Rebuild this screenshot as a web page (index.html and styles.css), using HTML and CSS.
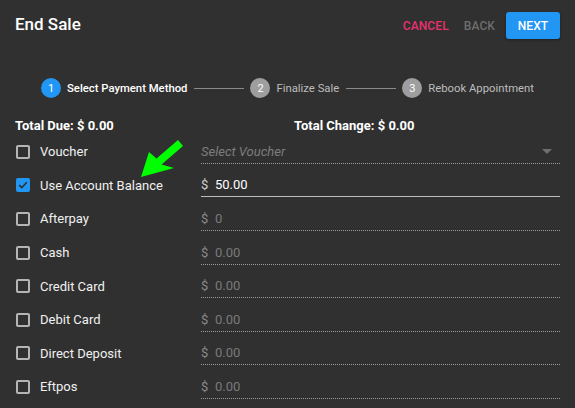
FILE: index.html
```html
<!DOCTYPE html>
<html>
<head>
<meta charset="utf-8">
<link rel="stylesheet" href="styles.css">
</head>
<body>
<div class="dialog">
  <div class="header">
    <div class="title">End Sale</div>
    <div class="actions">
      <button class="btn btn-cancel">CANCEL</button>
      <button class="btn btn-back">BACK</button>
      <button class="btn btn-next">NEXT</button>
    </div>
  </div>

  <div class="stepper">
    <div class="step active"><span class="num">1</span><span class="label">Select Payment Method</span></div>
    <div class="connector"></div>
    <div class="step"><span class="num">2</span><span class="label">Finalize Sale</span></div>
    <div class="connector"></div>
    <div class="step"><span class="num">3</span><span class="label">Rebook Appointment</span></div>
  </div>

  <div class="totals">
    <div>Total Due: $ 0.00</div>
    <div>Total Change: $ 0.00</div>
  </div>

  <div class="rows">
    <div class="row">
      <div class="check"><span class="box"></span><span class="name">Voucher</span></div>
      <div class="field disabled select"><span class="placeholder">Select Voucher</span><span class="caret"></span></div>
    </div>
    <div class="row">
      <div class="check"><span class="box checked"><svg viewBox="0 0 14 14" width="14" height="14"><path d="M3.2 7.2 L5.8 9.7 L10.8 4.3" fill="none" stroke="#303030" stroke-width="1.6"/></svg></span><span class="name">Use Account Balance</span></div>
      <div class="field"><span class="cur">$</span><span class="val">50.00</span></div>
    </div>
    <div class="row">
      <div class="check"><span class="box"></span><span class="name">Afterpay</span></div>
      <div class="field disabled"><span class="cur">$</span><span class="val">0</span></div>
    </div>
    <div class="row">
      <div class="check"><span class="box"></span><span class="name">Cash</span></div>
      <div class="field disabled"><span class="cur">$</span><span class="val">0.00</span></div>
    </div>
    <div class="row">
      <div class="check"><span class="box"></span><span class="name">Credit Card</span></div>
      <div class="field disabled"><span class="cur">$</span><span class="val">0.00</span></div>
    </div>
    <div class="row">
      <div class="check"><span class="box"></span><span class="name">Debit Card</span></div>
      <div class="field disabled"><span class="cur">$</span><span class="val">0.00</span></div>
    </div>
    <div class="row">
      <div class="check"><span class="box"></span><span class="name">Direct Deposit</span></div>
      <div class="field disabled"><span class="cur">$</span><span class="val">0.00</span></div>
    </div>
    <div class="row">
      <div class="check"><span class="box"></span><span class="name">Eftpos</span></div>
      <div class="field disabled"><span class="cur">$</span><span class="val">0.00</span></div>
    </div>
  </div>

  <svg class="arrow" viewBox="0 0 60 50" width="60" height="50">
    <polygon points="11,42 19,17 26.5,23.5 48,5 53,11 31.5,29.5 44,33" fill="#00ff00"/>
  </svg>
</div>
</body>
</html>
```

FILE: styles.css
```css
html, body {
  margin: 0;
  padding: 0;
  background: #303030;
}
body {
  font-family: Roboto, "Liberation Sans", sans-serif;
  color: #ffffff;
}
.dialog {
  position: relative;
  width: 575px;
  height: 408px;
  box-sizing: border-box;
  padding: 12px 15px 0 15px;
  overflow: hidden;
}
.header {
  display: flex;
  align-items: center;
  justify-content: space-between;
  height: 27px;
}
.title {
  font-size: 17px;
  font-weight: 500;
  margin-top: -3px;
}
.actions {
  display: flex;
  align-items: center;
  gap: 2px;
}
.btn {
  font-family: inherit;
  font-size: 12px;
  font-weight: 500;
  background: none;
  border: none;
  padding: 0 9px;
  height: 27px;
  cursor: pointer;
  letter-spacing: 0.1px;
}
.btn-cancel { color: #e8306e; padding: 0 4px 0 8px; }
.btn-back { color: #6d6d6d; padding: 0 9px 0 9px; }
.btn-next {
  background: #2196f3;
  color: #ffffff;
  width: 54px;
  padding: 0;
  border-radius: 3px;
  box-shadow: 0 1px 3px rgba(0,0,0,0.35);
}
.stepper {
  display: flex;
  align-items: center;
  justify-content: center;
  margin-top: 39px;
  height: 20px;
}
.step {
  display: flex;
  align-items: center;
  gap: 6px;
}
.num {
  width: 20px;
  height: 20px;
  border-radius: 50%;
  background: #9e9e9e;
  color: #ffffff;
  font-size: 11px;
  display: flex;
  align-items: center;
  justify-content: center;
}
.step .label {
  font-size: 11.3px;
  color: #bdbdbd;
}
.step.active .num { background: #2196f3; }
.step.active .label { color: #ffffff; font-weight: 500; }
.connector {
  width: 50px;
  height: 1px;
  background: #8a8a8a;
  margin: 0 6px 0 7px;
}
.totals {
  display: grid;
  grid-template-columns: 279px 1fr;
  font-size: 13px;
  font-weight: 700;
  height: 16px;
  line-height: 16px;
  margin-top: 20px;
}
.rows {
  margin-top: 1px;
}
.row {
  display: grid;
  grid-template-columns: 186px 1fr;
  align-items: center;
  height: 33.6px;
}
.check {
  display: flex;
  align-items: center;
}
.box {
  width: 14px;
  height: 14px;
  box-sizing: border-box;
  border: 2px solid #b5b5b5;
  border-radius: 2px;
  margin-left: 1px;
  display: flex;
}
.box.checked {
  background: #2196f3;
  border: none;
}
.name {
  font-size: 13px;
  color: #f0f0f0;
  margin-left: 10px;
}
.field {
  display: flex;
  align-items: center;
  height: 24px;
  box-sizing: border-box;
  border-bottom: 1px solid #bdbdbd;
  font-size: 13px;
}
.field.disabled {
  border-bottom: 1px dotted #9a9a9a;
}
.cur {
  color: #cfcfcf;
  width: 14px;
}
.val { color: #ffffff; }
.disabled .cur { color: #8a8a8a; }
.disabled .val { color: #7a7a7a; }
.select {
  justify-content: space-between;
}
.placeholder {
  font-style: italic;
  color: #7d7d7d;
}
.caret {
  width: 0;
  height: 0;
  border-left: 5px solid transparent;
  border-right: 5px solid transparent;
  border-top: 5px solid #6e6e6e;
  margin-right: 8px;
}
.arrow {
  position: absolute;
  left: 130px;
  top: 135px;
}
```
